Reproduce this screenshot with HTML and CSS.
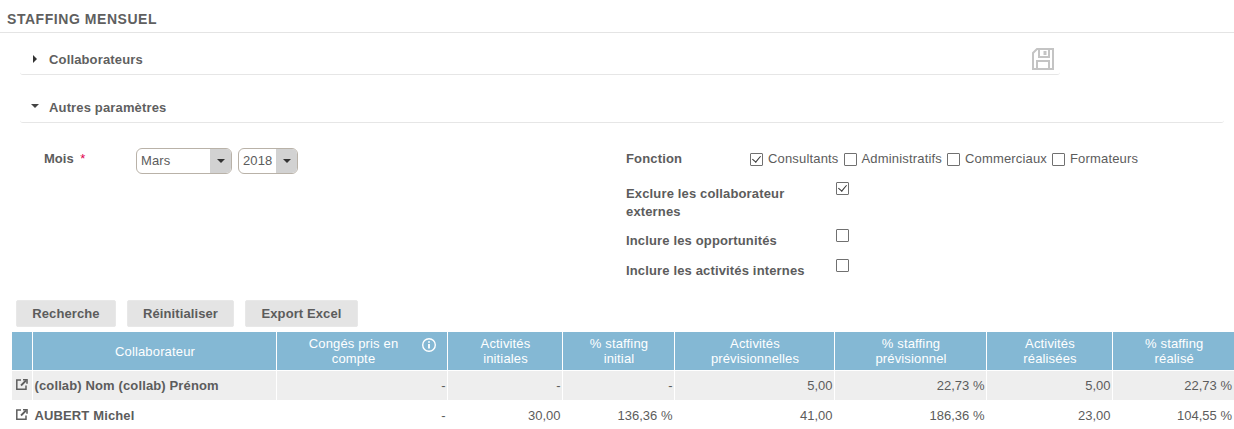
FILE: index.html
```html
<!DOCTYPE html>
<html lang="fr">
<head>
    <meta charset="UTF-8">
    <title>Staffing mensuel</title>
    <link rel="stylesheet" href="styles.css">
</head>
<body>
    <h1 class="page-title">STAFFING MENSUEL</h1>

    <div class="panel panel-short">
        <div class="panel-head">
            <span class="arrow-right"></span>
            <span>Collaborateurs</span>
            <svg class="save-icon" width="24" height="24" viewBox="0 0 24 24" fill="none" stroke="#c4c4c4" stroke-width="2">
                <path d="M6 2H22V22H2V6Z"/>
                <path d="M8 2V10H18V2"/>
                <path d="M14 4V8" stroke-width="3"/>
                <path d="M6 22V14H18V22"/>
            </svg>
        </div>
    </div>

    <div class="panel">
        <div class="panel-head">
            <span class="arrow-down"></span>
            <span>Autres paramètres</span>
        </div>
    </div>

    <div class="filters">
        <div class="filters-left">
            <label class="month-label">Mois <span class="required">*</span></label>
            <div class="combo combo-month"><span class="combo-value">Mars</span><span class="combo-btn"><i class="caret"></i></span></div>
            <div class="combo combo-year"><span class="combo-value">2018</span><span class="combo-btn"><i class="caret"></i></span></div>
        </div>
        <div class="filters-right">
            <div class="filter-row row-fonction">
                <label class="filter-label">Fonction</label>
                <div class="check-list">
                    <label class="check-item"><input type="checkbox" checked>Consultants</label>
                    <label class="check-item"><input type="checkbox">Administratifs</label>
                    <label class="check-item"><input type="checkbox">Commerciaux</label>
                    <label class="check-item"><input type="checkbox">Formateurs</label>
                </div>
            </div>
            <div class="filter-row row-externes">
                <label class="filter-label">Exclure les collaborateur externes</label>
                <input type="checkbox" checked>
            </div>
            <div class="filter-row row-opp">
                <label class="filter-label">Inclure les opportunités</label>
                <input type="checkbox">
            </div>
            <div class="filter-row row-internes">
                <label class="filter-label">Inclure les activités internes</label>
                <input type="checkbox">
            </div>
        </div>
    </div>

    <div class="actions">
        <button type="button" class="btn-search">Recherche</button>
        <button type="button" class="btn-reset">Réinitialiser</button>
        <button type="button" class="btn-export">Export Excel</button>
    </div>

    <table class="staffing">
        <colgroup>
            <col class="c-link"><col class="c-name"><col class="c-conges"><col class="c-init"><col class="c-pinit">
            <col class="c-prev"><col class="c-pprev"><col class="c-real"><col class="c-preal">
        </colgroup>
        <thead>
            <tr>
                <th></th>
                <th>Collaborateur</th>
                <th class="th-conges">
                    <div class="conges-wrap">
                        <span>Congés pris en compte</span>
                        <svg class="info-icon" width="16" height="16" viewBox="0 0 16 16" fill="none" stroke="#fff">
                            <circle cx="8" cy="8" r="6.3" stroke-width="1.4"/>
                            <path d="M8 7V11.6" stroke-width="1.8"/>
                            <path d="M8 4.2V5.8" stroke-width="1.8"/>
                        </svg>
                    </div>
                </th>
                <th>Activités<br>initiales</th>
                <th>% staffing<br>initial</th>
                <th>Activités<br>prévisionnelles</th>
                <th>% staffing<br>prévisionnel</th>
                <th>Activités<br>réalisées</th>
                <th>% staffing<br>réalisé</th>
            </tr>
        </thead>
        <tbody>
            <tr class="odd">
                <td class="link-cell">
                    <svg width="12" height="11" viewBox="0 0 12 11" fill="none" stroke="#5f5f5f" stroke-width="1.5"><path d="M5 1H.8V10.2H10V6.5"/><path d="M5 6.5L10 1.5" stroke-width="1.8"/><path d="M7 .8H11V4.8" stroke-width="1.6"/></svg>
                </td>
                <td class="name">(collab) Nom (collab) Prénom</td>
                <td>-</td><td>-</td><td>-</td><td>5,00</td><td>22,73 %</td><td>5,00</td><td>22,73 %</td>
            </tr>
            <tr>
                <td class="link-cell">
                    <svg width="12" height="11" viewBox="0 0 12 11" fill="none" stroke="#5f5f5f" stroke-width="1.5"><path d="M5 1H.8V10.2H10V6.5"/><path d="M5 6.5L10 1.5" stroke-width="1.8"/><path d="M7 .8H11V4.8" stroke-width="1.6"/></svg>
                </td>
                <td class="name">AUBERT Michel</td>
                <td>-</td><td>30,00</td><td>136,36 %</td><td>41,00</td><td>186,36 %</td><td>23,00</td><td>104,55 %</td>
            </tr>
        </tbody>
    </table>
</body>
</html>
```

FILE: styles.css
```css
html, body {
    overflow: hidden;
}
body {
    font-family: "Liberation Sans", Arial, sans-serif;
    font-size: 13px;
    color: #5c5c5c;
    margin: 0;
    background: #fff;
}
.page-title {
    margin: 0;
    height: 33px;
    padding: 12px 0 0 7px;
    box-sizing: border-box;
    font-size: 14px;
    line-height: 14px;
    font-weight: bold;
    letter-spacing: 0.55px;
    color: #5f5f5f;
    border-bottom: 1px solid #e4e4e4;
}
.panel {
    margin: 14px 10px 0 20px;
    border-bottom: 1px solid #e6e6e6;
    border-radius: 0 0 3px 3px;
}
.panel-short {
    margin-top: 0;
    margin-right: 174px;
    height: 41px;
}
.panel-head {
    position: relative;
    display: flex;
    align-items: center;
    height: 33px;
    padding: 4px 0 0 29px;
    box-sizing: border-box;
    font-weight: bold;
    letter-spacing: 0.15px;
    color: #5f5f5f;
}
.panel-short .panel-head {
    height: 52px;
    padding-top: 0;
    margin-bottom: -11px;
}
.arrow-right {
    position: absolute;
    left: 13px;
    top: 22px;
    border-left: 4px solid #333;
    border-top: 4px solid transparent;
    border-bottom: 4px solid transparent;
}
.arrow-down {
    position: absolute;
    left: 11px;
    top: 15px;
    border-top: 4px solid #444;
    border-left: 4px solid transparent;
    border-right: 4px solid transparent;
}
.save-icon {
    position: absolute;
    right: 5px;
    top: 14px;
}
.filters {
    display: flex;
    height: 177px;
}
.filters-left {
    width: 626px;
    padding: 25px 0 0 44px;
    box-sizing: border-box;
    display: flex;
    align-items: flex-start;
}
.month-label {
    width: 92px;
    font-weight: bold;
    line-height: 22px;
}
.required {
    color: #e0004d;
    margin-left: 3px;
    font-weight: normal;
}
.combo {
    display: flex;
    height: 26px;
    border: 1px solid #b9b2a8;
    border-radius: 6px;
    box-sizing: border-box;
    overflow: hidden;
    line-height: 24px;
    letter-spacing: 0.1px;
}
.combo-month {
    width: 96px;
    margin-right: 6px;
}
.combo-year {
    width: 60px;
}
.combo-value {
    flex: 1;
    padding-left: 4px;
}
.combo-btn {
    display: flex;
    align-items: center;
    justify-content: center;
    width: 21px;
    background: #d2d2d2;
}
.caret {
    border-top: 4px solid #333;
    border-left: 4px solid transparent;
    border-right: 4px solid transparent;
}
.filters-right {
    flex: 1;
    padding-top: 27px;
}
.filter-row {
    display: flex;
    align-items: flex-start;
}
.filter-label {
    width: 210px;
    font-weight: bold;
    line-height: 18px;
    letter-spacing: 0.15px;
}
.row-fonction .filter-label {
    width: 124px;
}
.row-fonction {
    height: 31px;
}
.row-externes {
    height: 47px;
}
.row-externes .filter-label {
    padding-top: 4px;
}
.row-opp {
    height: 30px;
}
.row-opp .filter-label,
.row-internes .filter-label {
    padding-top: 4px;
}
.check-list {
    display: flex;
    gap: 5px;
}
.check-item {
    display: flex;
    align-items: center;
    line-height: 18px;
    letter-spacing: 0.17px;
}
input[type="checkbox"] {
    appearance: none;
    position: relative;
    width: 13px;
    height: 13px;
    margin: 1px 5px 0 0;
    border: 1px solid #707070;
    border-radius: 1px;
    background: #fff;
    flex: none;
}
input[type="checkbox"]:checked::after {
    content: "";
    position: absolute;
    left: 3px;
    top: 0;
    width: 4px;
    height: 7px;
    border: solid #333;
    border-width: 0 1.5px 1.5px 0;
    transform: rotate(40deg);
}
.actions {
    display: flex;
    gap: 11px;
    margin-left: 16px;
}
.actions button {
    height: 27px;
    padding: 0;
    border: 1px solid #e8e8e8;
    border-radius: 2px;
    background: #e4e4e4;
    font: bold 13px "Liberation Sans", Arial, sans-serif;
    letter-spacing: 0.1px;
    color: #5c5c5c;
}
.btn-search {
    width: 100px;
}
.btn-reset {
    width: 107px;
}
.btn-export {
    width: 113px;
}
.staffing {
    margin: 5px 0 0 12px;
    width: 1222px;
    table-layout: fixed;
    border-collapse: collapse;
    font-size: 13px;
}
.c-link { width: 20px; }
.c-name { width: 244px; }
.c-conges { width: 171px; }
.c-init { width: 115px; }
.c-pinit { width: 112px; }
.c-prev { width: 160px; }
.c-pprev { width: 152px; }
.c-real { width: 126px; }
.c-preal { width: 122px; }
.staffing th {
    height: 38px;
    padding: 0 1px 0 3px;
    background: #84b8d4;
    color: #fff;
    font-weight: normal;
    line-height: 15px;
    letter-spacing: 0.15px;
    text-align: center;
    border-right: 1px solid #fff;
    border-bottom: 1px solid #fff;
}
.staffing th:last-child,
.staffing td:last-child {
    border-right: none;
}
.staffing td {
    height: 29px;
    padding: 0 1px 0 0;
    text-align: right;
    border-right: 1px solid #fff;
    border-bottom: 1px solid #fff;
}
.staffing td:last-child {
    padding-right: 2px;
}
.staffing .odd td {
    background: #eee;
}
.staffing td.name {
    text-align: left;
    padding-left: 2px;
    font-weight: bold;
    letter-spacing: 0.13px;
}
.staffing td.link-cell {
    padding: 0 0 0 4px;
    text-align: left;
}
.link-cell svg {
    display: block;
    margin-top: -2px;
}
.conges-wrap {
    position: relative;
    padding: 0 32px 0 14px;
}
.info-icon {
    position: absolute;
    right: 9px;
    top: 1px;
}
```
